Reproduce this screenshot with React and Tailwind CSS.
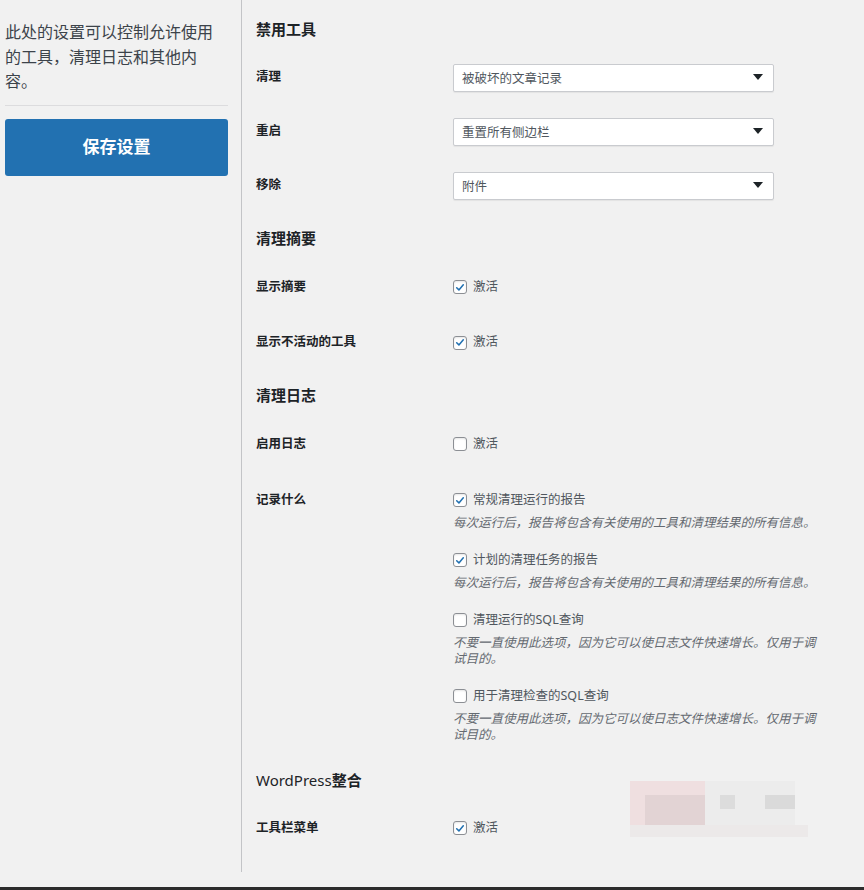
import React from "react";

const FONT = { fontFamily: '"Noto Sans", "Noto Sans CJK SC", sans-serif' };

function Check({ checked }) {
  return (
    <span className="flex h-[14px] w-[14px] shrink-0 items-center justify-center rounded-[3px] border border-[#8c8f94] bg-white shadow-[inset_0_1px_2px_rgba(0,0,0,0.1)]">
      {checked && (
        <svg viewBox="0 0 20 20" className="h-[13px] w-[13px]">
          <path d="M4.5 10.5 L8.2 14 L15.5 5.5" fill="none" stroke="#2271b1" strokeWidth="2.6" strokeLinecap="round" strokeLinejoin="round" />
        </svg>
      )}
    </span>
  );
}

function CheckLine({ checked, label }) {
  return (
    <div className="flex h-[20px] items-center gap-[6px]">
      <Check checked={checked} />
      <span className="text-[12.5px] text-[#50575e]">{label}</span>
    </div>
  );
}

function Select({ value }) {
  return (
    <div className="mt-[1px] flex h-[28px] w-[321px] items-center justify-between rounded-[2px] border border-[#c9cbcf] bg-white pl-[8px] pr-[10px] shadow-[0_1px_1px_rgba(0,0,0,0.06)]">
      <span className="pt-[3px] text-[12.5px] text-[#50575e]">{value}</span>
      <svg width="10" height="6" viewBox="0 0 10 6" className="mb-[1px]">
        <path d="M0 0 H10 L5 6 Z" fill="#1d2327" />
      </svg>
    </div>
  );
}

function Heading({ children, className }) {
  return (
    <div className={"flex items-start " + className}>
      <h2 className="h-[24px] text-[15px] leading-[24px] font-bold text-[#1d2327]">{children}</h2>
    </div>
  );
}

function Row({ label, children, className }) {
  return (
    <div className={"flex items-center " + className}>
      <div className="w-[197px] text-[12.5px] font-bold text-[#1d2327]">{label}</div>
      <div>{children}</div>
    </div>
  );
}

function Desc({ children }) {
  return (
    <p className="mt-[5px] w-[368px] text-[12.5px] italic leading-[16px] text-[#646970]">{children}</p>
  );
}

export default function App() {
  const longDesc = "每次运行后，报告将包含有关使用的工具和清理结果的所有信息。";
  const sqlDesc = "不要一直使用此选项，因为它可以使日志文件快速增长。仅用于调试目的。";
  return (
    <div style={FONT} className="relative h-[890px] w-[864px] overflow-hidden bg-[#f1f1f1]">
      <div className="flex h-[872px]">
        <aside className="w-[242px] shrink-0 border-r border-[#c3c4c7] pl-[5px] pr-[13px] pt-[20px]">
          <p className="text-[16px] leading-[24.5px] text-[#3c434a]">此处的设置可以控制允许使用的工具，清理日志和其他内容。</p>
          <div className="mt-[11px] border-t border-[#dcdcde]" />
          <button className="mt-[13px] flex h-[57px] w-full items-center justify-center rounded-[3px] bg-[#2271b1] text-[17px] font-bold text-white">
            保存设置
          </button>
        </aside>
        <main className="flex-1 pl-[14px]">
          <Heading className="h-[50px] pt-[17px]">禁用工具</Heading>
          <Row label="清理" className="h-[54px]"><Select value="被破坏的文章记录" /></Row>
          <Row label="重启" className="h-[54px]"><Select value="重置所有侧边栏" /></Row>
          <Row label="移除" className="h-[54px]"><Select value="附件" /></Row>

          <Heading className="h-[47px] pt-[14px]">清理摘要</Heading>
          <Row label="显示摘要" className="h-[56px]"><CheckLine checked label="激活" /></Row>
          <Row label="显示不活动的工具" className="h-[55px]"><CheckLine checked label="激活" /></Row>

          <Heading className="h-[46px] pt-[13px]">清理日志</Heading>
          <Row label="启用日志" className="h-[56px]"><CheckLine label="激活" /></Row>

          <div className="flex pt-[18px] pb-[10px]">
            <div className="w-[197px] text-[12.5px] font-bold leading-[20px] text-[#1d2327]">记录什么</div>
            <div className="flex flex-col gap-[19px]">
              <div>
                <CheckLine checked label="常规清理运行的报告" />
                <Desc>{longDesc}</Desc>
              </div>
              <div>
                <CheckLine checked label="计划的清理任务的报告" />
                <Desc>{longDesc}</Desc>
              </div>
              <div>
                <CheckLine label="清理运行的SQL查询" />
                <Desc>{sqlDesc}</Desc>
              </div>
              <div>
                <CheckLine label="用于清理检查的SQL查询" />
                <Desc>{sqlDesc}</Desc>
              </div>
            </div>
          </div>

          <div className="flex h-[47px] items-start pt-[15px]">
            <h2 className="h-[24px] text-[15px] leading-[24px] text-[#1d2327]">
              <span className="font-normal">WordPress</span><span className="font-bold">整合</span>
            </h2>
          </div>
          <Row label="工具栏菜单" className="h-[56px]"><CheckLine checked label="激活" /></Row>
        </main>
      </div>
      <div className="absolute bottom-0 left-0 h-[3px] w-full bg-[#2c2c2c]" />
      {/* watermark mosaic */}
      <div className="pointer-events-none absolute left-[630px] top-[781px] h-[44px] w-[75px] bg-[#efdfe0]" />
      <div className="pointer-events-none absolute left-[645px] top-[795px] h-[30px] w-[60px] bg-[#e2d3d4]" />
      <div className="pointer-events-none absolute left-[630px] top-[825px] h-[12px] w-[178px] bg-[#ece9e9]" />
      <div className="pointer-events-none absolute left-[705px] top-[781px] h-[44px] w-[90px] bg-[#ececec]" />
      <div className="pointer-events-none absolute left-[720px] top-[795px] h-[14px] w-[15px] bg-[#dcdcdc]" />
      <div className="pointer-events-none absolute left-[765px] top-[795px] h-[14px] w-[30px] bg-[#dadada]" />
    </div>
  );
}
